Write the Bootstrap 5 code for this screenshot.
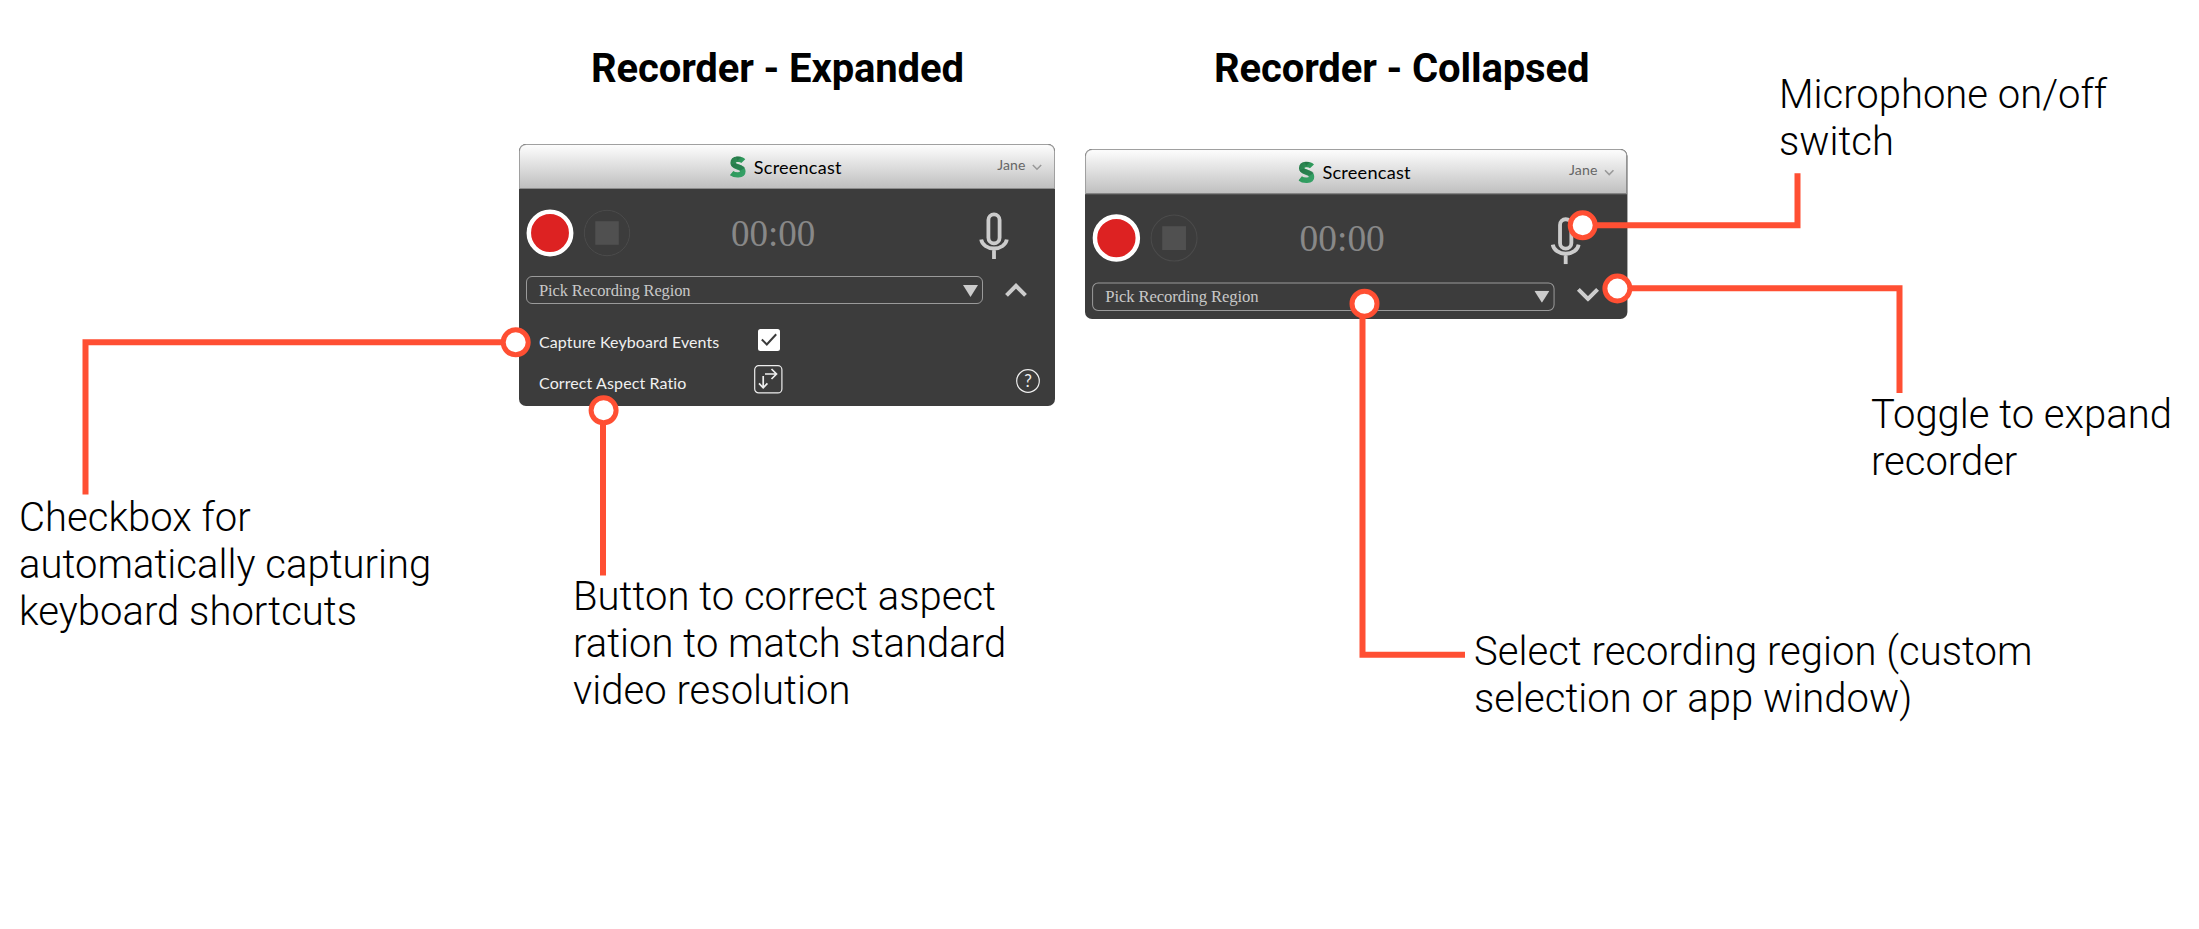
<!DOCTYPE html>
<html lang="en">
<head>
<meta charset="utf-8">
<title>Screencast recorder guide</title>
<link href="https://cdn.jsdelivr.net/npm/bootstrap@5.3.0/dist/css/bootstrap.min.css" rel="stylesheet">
<style>
  body { background: #fff; color: #000; }
  .canvas { width: 2199px; height: 929px; font-family: Roboto, sans-serif; }
  /* items pinned on the annotated canvas */
  .pin { position: absolute; margin: 0; white-space: nowrap; font-size: 40px; line-height: 47px; }
  .note { font-weight: 300; letter-spacing: .03px; }
  .heading { font-weight: 700; letter-spacing: -.12px; }
  .leaders { position: absolute; inset: 0; pointer-events: none; }

  .recorder { position: absolute; width: 535.5px; border-radius: 7px; background: #3c3c3c; font-family: Lato, sans-serif; overflow: hidden; transform-origin: 0 0; line-height: 1; }
  .titlebar { height: 45px; border: 1px solid #a0a0a0; border-bottom-color: #8c8c8c; border-radius: 7px 7px 0 0; background: linear-gradient(#fdfdfd, #bfbfbf); display: grid; grid-template-columns: 1fr auto 1fr; padding: 0 12px 0 0; }
  .app-name { font-size: 18px; letter-spacing: .25px; color: #000; padding: 1px 0 0 10px; }
  .user { font-size: 14px; letter-spacing: .1px; color: #666; padding-bottom: 3px; }
  .controls { height: 86.5px; padding: 1px 46px 0 7px; }
  .clock { font-family: "Liberation Serif", serif; font-size: 37px; color: #888; }
  .picker { width: 457px; height: 28.5px; border: 1px solid #9a9a9a; border-radius: 6px; padding: 1px 4px 0 12px; font-family: "Liberation Serif", serif; font-size: 16.5px; letter-spacing: -.12px; color: #c8c8c8; }
  .option { font-size: 16px; letter-spacing: .1px; color: #f0f0f0; }
  .option > span { width: 215px; }
  svg { display: block; }
</style>
</head>
<body>
<svg width="0" height="0" class="position-absolute">
  <defs>
    <linearGradient id="green" x1="0" y1="0" x2="1" y2="1"><stop offset="0" stop-color="#2a7d4c"/><stop offset=".5" stop-color="#2f9a5c"/><stop offset="1" stop-color="#35a066"/></linearGradient>
    <symbol id="logo" viewBox="0 0 16 22">
      <path d="M13.300 5.200C11 2.700 3.200 2 3.100 7c0 4.500 9.800 3.200 9.800 8.300 0 4.800-8.300 4.200-11.300 1.700" fill="none" stroke="url(#green)" stroke-width="5.400"/>
      <path d="M1 9c1.500 3.500 6 3.200 9.500 5.500L15 12C13.500 9 9 9.200 5.300 7.200z" fill="#236c43" opacity=".55"/>
      <path d="M6 .6l5 .2-3.500 4z" fill="#1f6a40" opacity=".5"/>
    </symbol>
    <symbol id="rec" viewBox="0 0 48 48"><circle cx="24" cy="24" r="21.200" fill="#d22" stroke="#fff" stroke-width="4.500"/></symbol>
    <symbol id="stop" viewBox="0 0 48 48"><circle cx="24" cy="24" r="22.700" fill="none" stroke="#4b4b4b"/><path d="M12.300 12.300h23.500v23.500H12.300z" fill="#505050"/></symbol>
    <symbol id="mic" viewBox="0 0 30 47"><g fill="none" stroke="#ccc" stroke-width="3.800"><rect x="9.400" y="2.400" width="11.200" height="29" rx="5.600"/><path d="M2.200 27.500a12.900 10.300 0 0 0 25.600 0M15 37v10"/></g></symbol>
    <symbol id="up" viewBox="0 0 22 14"><path d="M1.500 12.300 11 2.800l9.500 9.500" fill="none" stroke="#ccc" stroke-width="4"/></symbol>
  </defs>
</svg>

<main class="canvas position-relative overflow-hidden">
  <h1 class="pin heading" style="left:591px;top:45px">Recorder - Expanded</h1>
  <h1 class="pin heading" style="left:1214px;top:45px">Recorder - Collapsed</h1>

  <section class="recorder" style="left:519px;top:144.400px;height:261.300px">
    <header class="titlebar align-items-center">
      <i></i>
      <div class="app-name d-flex align-items-center"><svg width="16" height="22" class="me-2"><use href="#logo"/></svg><span>Screencast</span></div>
      <div class="user d-flex align-items-center justify-content-end"><span>Jane</span><svg width="10" height="7" viewBox="0 0 10 7" style="margin:4px 0 0 6px"><path d="M.8 1 5 5.300 9.200 1" fill="none" stroke="#999" stroke-width="1.500"/></svg></div>
    </header>
    <div class="controls d-flex align-items-center">
      <svg width="48" height="48"><use href="#rec"/></svg>
      <svg width="48" height="48" style="margin-left:9px"><use href="#stop"/></svg>
      <span class="clock" style="margin-left:100px">00:00</span>
      <svg class="ms-auto" width="30" height="47" style="margin-top:4px"><use href="#mic"/></svg>
    </div>
    <div class="d-flex align-items-center" style="padding-left:7px">
      <div class="picker d-flex align-items-center justify-content-between"><span style="padding-top:1px">Pick Recording Region</span><svg width="15" height="12"><path d="M0 0h15L7.500 12z" fill="#ccc"/></svg></div>
      <svg width="22" height="14" style="margin-left:22px"><use href="#up"/></svg>
    </div>
    <div class="option d-flex align-items-center" style="padding:24px 0 0 20px;height:48px">
      <span style="width:219px;padding-top:3px">Capture Keyboard Events</span>
      <svg width="22" height="22" viewBox="0 0 22 22"><rect width="22" height="22" rx="2.500" fill="#fff"/><path d="M3.800 10.500l5 5L18.200 5.300" fill="none" stroke="#3c3c3c" stroke-width="2"/></svg>
    </div>
    <div class="option d-flex align-items-center" style="padding:12px 15px 0 20px;height:42px">
      <span style="padding-top:8px">Correct Aspect Ratio</span>
      <svg width="29" height="29" viewBox="0 0 29 29"><rect x=".7" y=".7" width="27.200" height="27.200" rx="4" fill="none" stroke="#eee" stroke-width="1.200"/><path d="M11 9H22.500M17.500 4l5 5-5 5M9.200 11v11.800M5 18.300l4.200 4.500 4.200-4.500" fill="none" stroke="#eee" stroke-width="1.700"/></svg>
      <svg class="ms-auto" width="24" height="24" viewBox="0 0 24 24" style="margin-top:4px"><circle cx="12" cy="12" r="11.300" fill="none" stroke="#eee" stroke-width="1.200"/><text x="12" y="18" text-anchor="middle" font-size="17" fill="#eee">?</text></svg>
    </div>
  </section>

  <section class="recorder" style="left:1085px;top:148.500px;height:168px;transform:scale(1.012)">
    <header class="titlebar align-items-center">
      <i></i>
      <div class="app-name d-flex align-items-center" style="padding-left:9px;letter-spacing:.2px"><svg width="16" height="22" class="me-2"><use href="#logo"/></svg><span>Screencast</span></div>
      <div class="user d-flex align-items-center justify-content-end"><span>Jane</span><svg width="10" height="7" viewBox="0 0 10 7" style="margin:4px 0 0 6px"><path d="M.8 1 5 5.300 9.200 1" fill="none" stroke="#999" stroke-width="1.500"/></svg></div>
    </header>
    <div class="controls d-flex align-items-center" style="padding-top:0">
      <svg width="48" height="48"><use href="#rec"/></svg>
      <svg width="48" height="48" style="margin-left:9px"><use href="#stop"/></svg>
      <span class="clock" style="margin-left:100px">00:00</span>
      <svg class="ms-auto" width="30" height="47" style="margin-top:4px"><use href="#mic"/></svg>
    </div>
    <div class="d-flex align-items-center" style="padding-left:7px">
      <div class="picker d-flex align-items-center justify-content-between"><span>Pick Recording Region</span><svg width="15" height="12"><path d="M0 0h15L7.500 12z" fill="#ccc"/></svg></div>
      <svg width="22" height="14" style="margin-left:22px;margin-bottom:4px;transform:scaleY(-1)"><use href="#up"/></svg>
    </div>
  </section>

  <p class="pin note" style="left:19px;top:494px">Checkbox for<br>automatically capturing<br>keyboard shortcuts</p>
  <p class="pin note" style="left:573px;top:573px">Button to correct aspect<br>ration to match standard<br>video resolution</p>
  <p class="pin note" style="left:1779px;top:71px;letter-spacing:0">Microphone on/off<br>switch</p>
  <p class="pin note" style="left:1871px;top:391px;letter-spacing:0">Toggle to expand<br>recorder</p>
  <p class="pin note" style="left:1474px;top:628px">Select recording region (custom<br>selection or app window)</p>

  <svg class="leaders" width="2199" height="929" fill="none" stroke="#ff4f33" stroke-width="6">
    <path d="M515 342.300H85.500V494.500M603 410V575.500M1583 225.300H1797.500V173.300M1617 288.200H1899.500V393M1362.500 303V654.700H1465"/>
    <g fill="#fff" stroke-width="5">
      <circle cx="515.700" cy="342.300" r="12.500"/><circle cx="603.600" cy="410.300" r="12.500"/><circle cx="1582.700" cy="225.300" r="12.500"/><circle cx="1617.400" cy="288.500" r="12.500"/><circle cx="1364.500" cy="303.700" r="12.500"/>
    </g>
  </svg>
</main>
<script src="https://cdn.jsdelivr.net/npm/bootstrap@5.3.0/dist/js/bootstrap.bundle.min.js"></script>
</body>
</html>
